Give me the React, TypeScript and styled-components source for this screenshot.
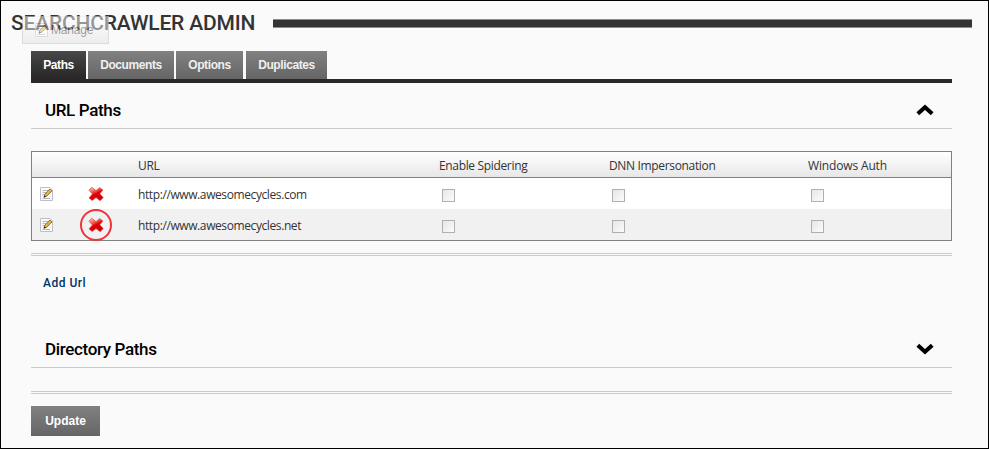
import React from "react";
import styled, { createGlobalStyle } from "styled-components";

const Global = createGlobalStyle`
  * { box-sizing: border-box; }
  body { margin: 0; background: #fafafa; }
`;

const Page = styled.main`
  width: 989px;
  height: 449px;
  border: 1px solid #000;
  background: #fafafa;
  font: 12px "Open Sans", "Noto Sans", sans-serif;
  color: #333;
  position: relative;
  overflow: hidden;
`;

const TitleRow = styled.header`
  display: flex;
  align-items: center;
  height: 44px;
  padding: 0 16px 0 10px;
`;

const Title = styled.h1`
  margin: 0;
  width: 262px;
  flex: none;
  font: 500 21px/44px Roboto, sans-serif;
  letter-spacing: -0.18px;
  white-space: nowrap;
  color: #333;
`;

const TitleRule = styled.div`
  flex: 1;
  height: 9px;
  margin-top: 1px;
  background: #333533;
  border: solid #8b8f8b;
  border-width: 1px 0;
`;

const ManageButton = styled.button`
  position: absolute;
  left: 21px;
  top: 15px;
  width: 87px;
  height: 28px;
  display: flex;
  align-items: center;
  gap: 1px;
  padding: 0 0 0 11px;
  border: 1px solid #c0c0c0;
  border-top-color: #e8e8e8;
  background: linear-gradient(#fff, #e2e2e2);
  font: 12px "Liberation Sans", Arial, sans-serif;
  letter-spacing: -0.2px;
  color: #444;
  opacity: 0.5;
`;

const Content = styled.div`
  width: 921px;
  margin: 6px 0 0 30px;
`;

const Tabs = styled.nav`
  display: flex;
  gap: 2px;
  height: 32px;
  margin-bottom: 7px;
  border-bottom: 4px solid #2a2829;
`;

const Tab = styled.button<{ $width: number; $active?: boolean; $shift?: number }>`
  width: ${(p) => p.$width}px;
  height: 28px;
  margin: 0 0 0 ${(p) => p.$shift ?? 0}px;
  padding: 0;
  border: 0;
  background: ${(p) => (p.$active ? "linear-gradient(#484848, #282627)" : "linear-gradient(#818181, #656565)")};
  color: ${(p) => (p.$active ? "#fff" : "#efefef")};
  font: bold 12px/27px "Liberation Sans", Arial, sans-serif;
  letter-spacing: -0.4px;
  white-space: nowrap;
`;

const SectionHead = styled.div`
  display: flex;
  align-items: center;
  justify-content: space-between;
  height: 39px;
  padding: 2px 18px 0 14px;
  border-bottom: 1px solid #ccc;
`;

const SectionTitle = styled.h2`
  margin: 0;
  font: 500 17px/36px Roboto, sans-serif;
  letter-spacing: -0.35px;
  color: #000;
`;

const Grid = styled.div`
  margin-top: 22px;
  height: 90px;
  border: 1px solid #808080;
  background: #fff;
`;

const Row = styled.div<{ $kind?: "head" | "alt" }>`
  display: grid;
  grid-template-columns: 48px 58px 301px 170px 199px 1fr;
  align-items: center;
  height: ${(p) => (p.$kind === "head" ? 26 : 31)}px;
  padding-top: 1px;
  ${(p) => p.$kind === "head" && "background: linear-gradient(#fff, #e7e7e7); border-bottom: 1px solid #808080;"}
  ${(p) => p.$kind === "alt" && "background: #f1f1f1;"}
`;

const Text = styled.span<{ $spacing?: number }>`
  letter-spacing: ${(p) => p.$spacing ?? -0.34}px;
  line-height: 18px;
  padding-top: 2px;
  white-space: nowrap;
`;

const IconCell = styled.span<{ $left: number }>`
  display: flex;
  padding-left: ${(p) => p.$left}px;
  position: relative;
`;

const Ring = styled.span`
  position: absolute;
  left: 0;
  top: -8px;
  width: 32px;
  height: 32px;
  border: 2px solid #f0323a;
  border-radius: 50%;
`;

const Check = styled.span`
  width: 13px;
  height: 13px;
  margin: 3px 0 0 3px;
  border: 1px solid #b0b0b0;
  background: linear-gradient(135deg, #e6e6e6, #fcfcfc);
`;

const DoubleRule = styled.div<{ $top: number }>`
  height: 3px;
  margin-top: ${(p) => p.$top}px;
  border: solid #ccc;
  border-width: 1px 0;
`;

const AddLink = styled.a`
  display: block;
  height: 20px;
  margin: 17px 0 36px 12px;
  font: 500 12px/20px Roboto, sans-serif;
  letter-spacing: 0.5px;
  color: #003366;
`;

const Update = styled.button`
  display: block;
  width: 69px;
  height: 30px;
  margin-top: 12px;
  padding: 0;
  border: 0;
  background: linear-gradient(#818181, #656565);
  color: #fff;
  font: bold 12px "Liberation Sans", Arial, sans-serif;
`;

const EditIcon = () => (
  <svg width="16" height="16" viewBox="0 0 16 16">
    <path d="M1.5 1.5h9.5l2.5 2.5v10.5h-12z" fill="#fafafa" stroke="#bcc0c4" />
    <path d="M3.5 4.5h6M3.5 6.5h5M3.5 8.5h3M3.5 12.5h7.5" stroke="#b4bac0" />
    <path d="M5 11.2l.8-3L10.9 3l2.1 2-5.2 5.2z" fill="#e3b23c" stroke="#6b5526" strokeWidth=".7" />
    <path d="M4.6 11.6l.8-2.3 1.6 1.5z" fill="#222" />
  </svg>
);

const DeleteIcon = () => (
  <svg width="16" height="16" viewBox="0 0 16 16">
    <defs>
      <linearGradient id="deleteRed" x1="0" y1="0" x2="0.5" y2="1">
        <stop offset="0" stopColor="#fad4c4" />
        <stop offset=".4" stopColor="#f0564a" />
        <stop offset=".58" stopColor="#e60008" />
        <stop offset="1" stopColor="#cc000a" />
      </linearGradient>
    </defs>
    <path d="M3.7 1.2L8 4.6l3.7-3.1 3.2 2.6-3.1 3.7 3.4 3.8-3 3.1L8 11.6l-3.8 3L1 11.9 4.4 8 .9 4.2z" fill="url(#deleteRed)" stroke="#d8423c" strokeWidth=".6" strokeLinejoin="round" />
  </svg>
);

const Arrow = ({ down }: { down?: boolean }) => (
  <svg width="18" height="12" viewBox="0 0 18 12">
    <path d={down ? "M1.8 2.2L9 8.8l7.2-6.6" : "M1.8 9.8L9 3.2l7.2 6.6"} fill="none" stroke="#000" strokeWidth="4" />
  </svg>
);

const rows = [
  { url: "http://www.awesomecycles.com", alt: false },
  { url: "http://www.awesomecycles.net", alt: true },
];

export default function App() {
  return (
    <Page>
      <Global />
      <TitleRow>
        <Title>SEARCHCRAWLER ADMIN</Title>
        <TitleRule />
      </TitleRow>
      <ManageButton><EditIcon />Manage</ManageButton>
      <Content>
        <Tabs>
          <Tab $width={55} $active>Paths</Tab>
          <Tab $width={86}>Documents</Tab>
          <Tab $width={67}>Options</Tab>
          <Tab $width={81} $shift={1}>Duplicates</Tab>
        </Tabs>
        <SectionHead><SectionTitle>URL Paths</SectionTitle><Arrow /></SectionHead>
        <Grid>
          <Row $kind="head">
            <span /><span /><Text>URL</Text><Text>Enable Spidering</Text><Text>DNN Impersonation</Text><Text $spacing={-0.15}>Windows Auth</Text>
          </Row>
          {rows.map((r) => (
            <Row key={r.url} $kind={r.alt ? "alt" : undefined}>
              <IconCell $left={7}><EditIcon /></IconCell>
              <IconCell $left={8}>{r.alt && <Ring />}<DeleteIcon /></IconCell>
              <Text $spacing={-0.4}>{r.url}</Text><Check /><Check /><Check />
            </Row>
          ))}
        </Grid>
        <DoubleRule $top={12} />
        <AddLink>Add Url</AddLink>
        <SectionHead><SectionTitle>Directory Paths</SectionTitle><Arrow down /></SectionHead>
        <DoubleRule $top={23} />
        <Update>Update</Update>
      </Content>
    </Page>
  );
}
